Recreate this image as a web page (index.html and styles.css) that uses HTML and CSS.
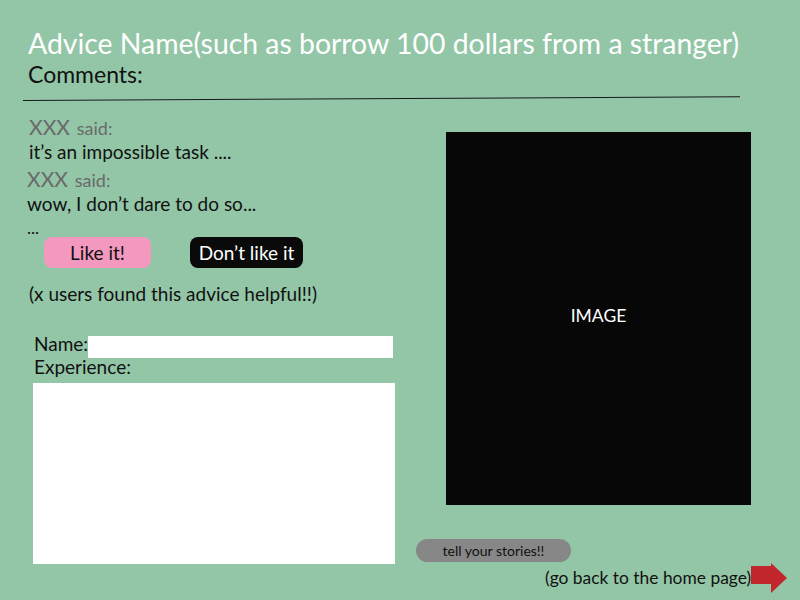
FILE: index.html
```html
<!DOCTYPE html>
<html>
<head>
<meta charset="utf-8">
<link rel="stylesheet" href="styles.css">
</head>
<body>
<div class="page">
  <header class="header">
    <h1 class="title">Advice Name(such as borrow 100 dollars from a stranger)</h1>
    <h2 class="subtitle">Comments:</h2>
    <div class="rule"></div>
  </header>
  <main class="main">
    <section class="left">
      <div class="comment c1">
        <div class="author"><span class="who">XXX</span> <span class="said">said:</span></div>
        <div class="text">it’s an impossible task ....</div>
      </div>
      <div class="comment c2">
        <div class="author"><span class="who">XXX</span> <span class="said">said:</span></div>
        <div class="text">wow, I don’t dare to do so...</div>
        <div class="more">...</div>
      </div>
      <div class="votes">
        <button class="btn like">Like it!</button>
        <button class="btn dislike">Don’t like it</button>
      </div>
      <p class="helpful">(x users found this advice helpful!!)</p>
      <form class="form">
        <div class="name-row"><label class="lbl">Name:</label><input class="name-input" type="text"></div>
        <label class="lbl">Experience:</label>
        <textarea class="exp"></textarea>
      </form>
    </section>
    <section class="right">
      <div class="image">IMAGE</div>
      <button class="tell">tell your stories!!</button>
      <div class="home">
        <span class="home-text">(go back to the home page)</span>
        <svg class="arrow" width="36" height="30" viewBox="0 0 36 30"><path d="M0 3 H20 V0 L36 15 L20 30 V21 H0 Z" fill="#c1272d"/></svg>
      </div>
    </section>
  </main>
</div>
</body>
</html>
```
FILE: styles.css
```css
* { box-sizing: border-box; }
html, body { margin: 0; padding: 0; }
body {
  background: #93c6a7;
  font-family: Lato, "Open Sans", sans-serif;
  color: #111;
  width: 800px;
  height: 600px;
  overflow: hidden;
}
.page { width: 800px; height: 600px; }
.header { padding: 26px 0 0 0; }
.title {
  margin: 0 0 0 28px;
  font-weight: 400;
  font-size: 28.4px;
  line-height: 34px;
  color: #ffffff;
}
.subtitle {
  margin: 0 0 0 28px;
  font-weight: 400;
  font-size: 23px;
  line-height: 28px;
  color: #111;
}
.rule {
  margin: 12px 0 0 23px;
  width: 717px;
  height: 1px;
  background: #1a1a1a;
  transform: rotate(-0.3deg);
  transform-origin: left center;
}
.main {
  display: flex;
  padding-top: 14px;
}
.left { width: 416px; flex: none; }
.comment { font-size: 19px; }
.c1 { margin-left: 29px; }
.c2 { margin-left: 27px; margin-top: 3px; }
.author { line-height: 24px; color: #6a6a6a; }
.who { font-size: 21px; }
.said { font-size: 18px; margin-left: 2px; }
.text { line-height: 24px; color: #111; }
.more { line-height: 16px; font-size: 17px; padding-top: 4px; }
.votes {
  display: flex;
  margin: 1px 0 0 44px;
  gap: 39px;
}
.btn {
  height: 31px;
  border: none;
  border-radius: 8px;
  font-family: inherit;
  font-size: 19px;
  padding: 0;
}
.like { width: 107px; background: #f399c0; color: #111; }
.dislike { width: 113px; background: #0a0a0a; color: #fff; }
.helpful {
  margin: 15px 0 0 29px;
  font-size: 19px;
  line-height: 22px;
}
.form { margin: 30px 0 0 33px; display: flex; flex-direction: column; align-items: flex-start; }
.name-row { display: flex; align-items: flex-start; }
.lbl { font-size: 19px; line-height: 18px; padding-left: 1px; }
.name-input {
  width: 305px;
  height: 22px;
  margin-top: 1px;
  border: none;
  background: #fff;
  outline: none;
}
.exp {
  margin-top: 7px;
  width: 362px;
  height: 181px;
  border: none;
  background: #fff;
  resize: none;
  outline: none;
}
.right {
  display: flex;
  flex-direction: column;
  padding-top: 17px;
}
.image {
  margin-left: 30px;
  width: 305px;
  height: 373px;
  background: #070707;
  color: #fff;
  display: flex;
  align-items: center;
  justify-content: center;
  font-size: 17.5px;
  padding-bottom: 6px;
}
.tell {
  margin-top: 34px;
  width: 155px;
  height: 23px;
  border: none;
  border-radius: 12px;
  background: #878787;
  color: #111;
  font-family: inherit;
  font-size: 14px;
  padding: 0;
}
.home {
  display: flex;
  align-items: center;
  margin: 1px 0 0 129px;
}
.home-text { font-size: 17.4px; line-height: 30px; white-space: nowrap; }
.arrow { display: block; margin-left: 0; flex: none; }
```
